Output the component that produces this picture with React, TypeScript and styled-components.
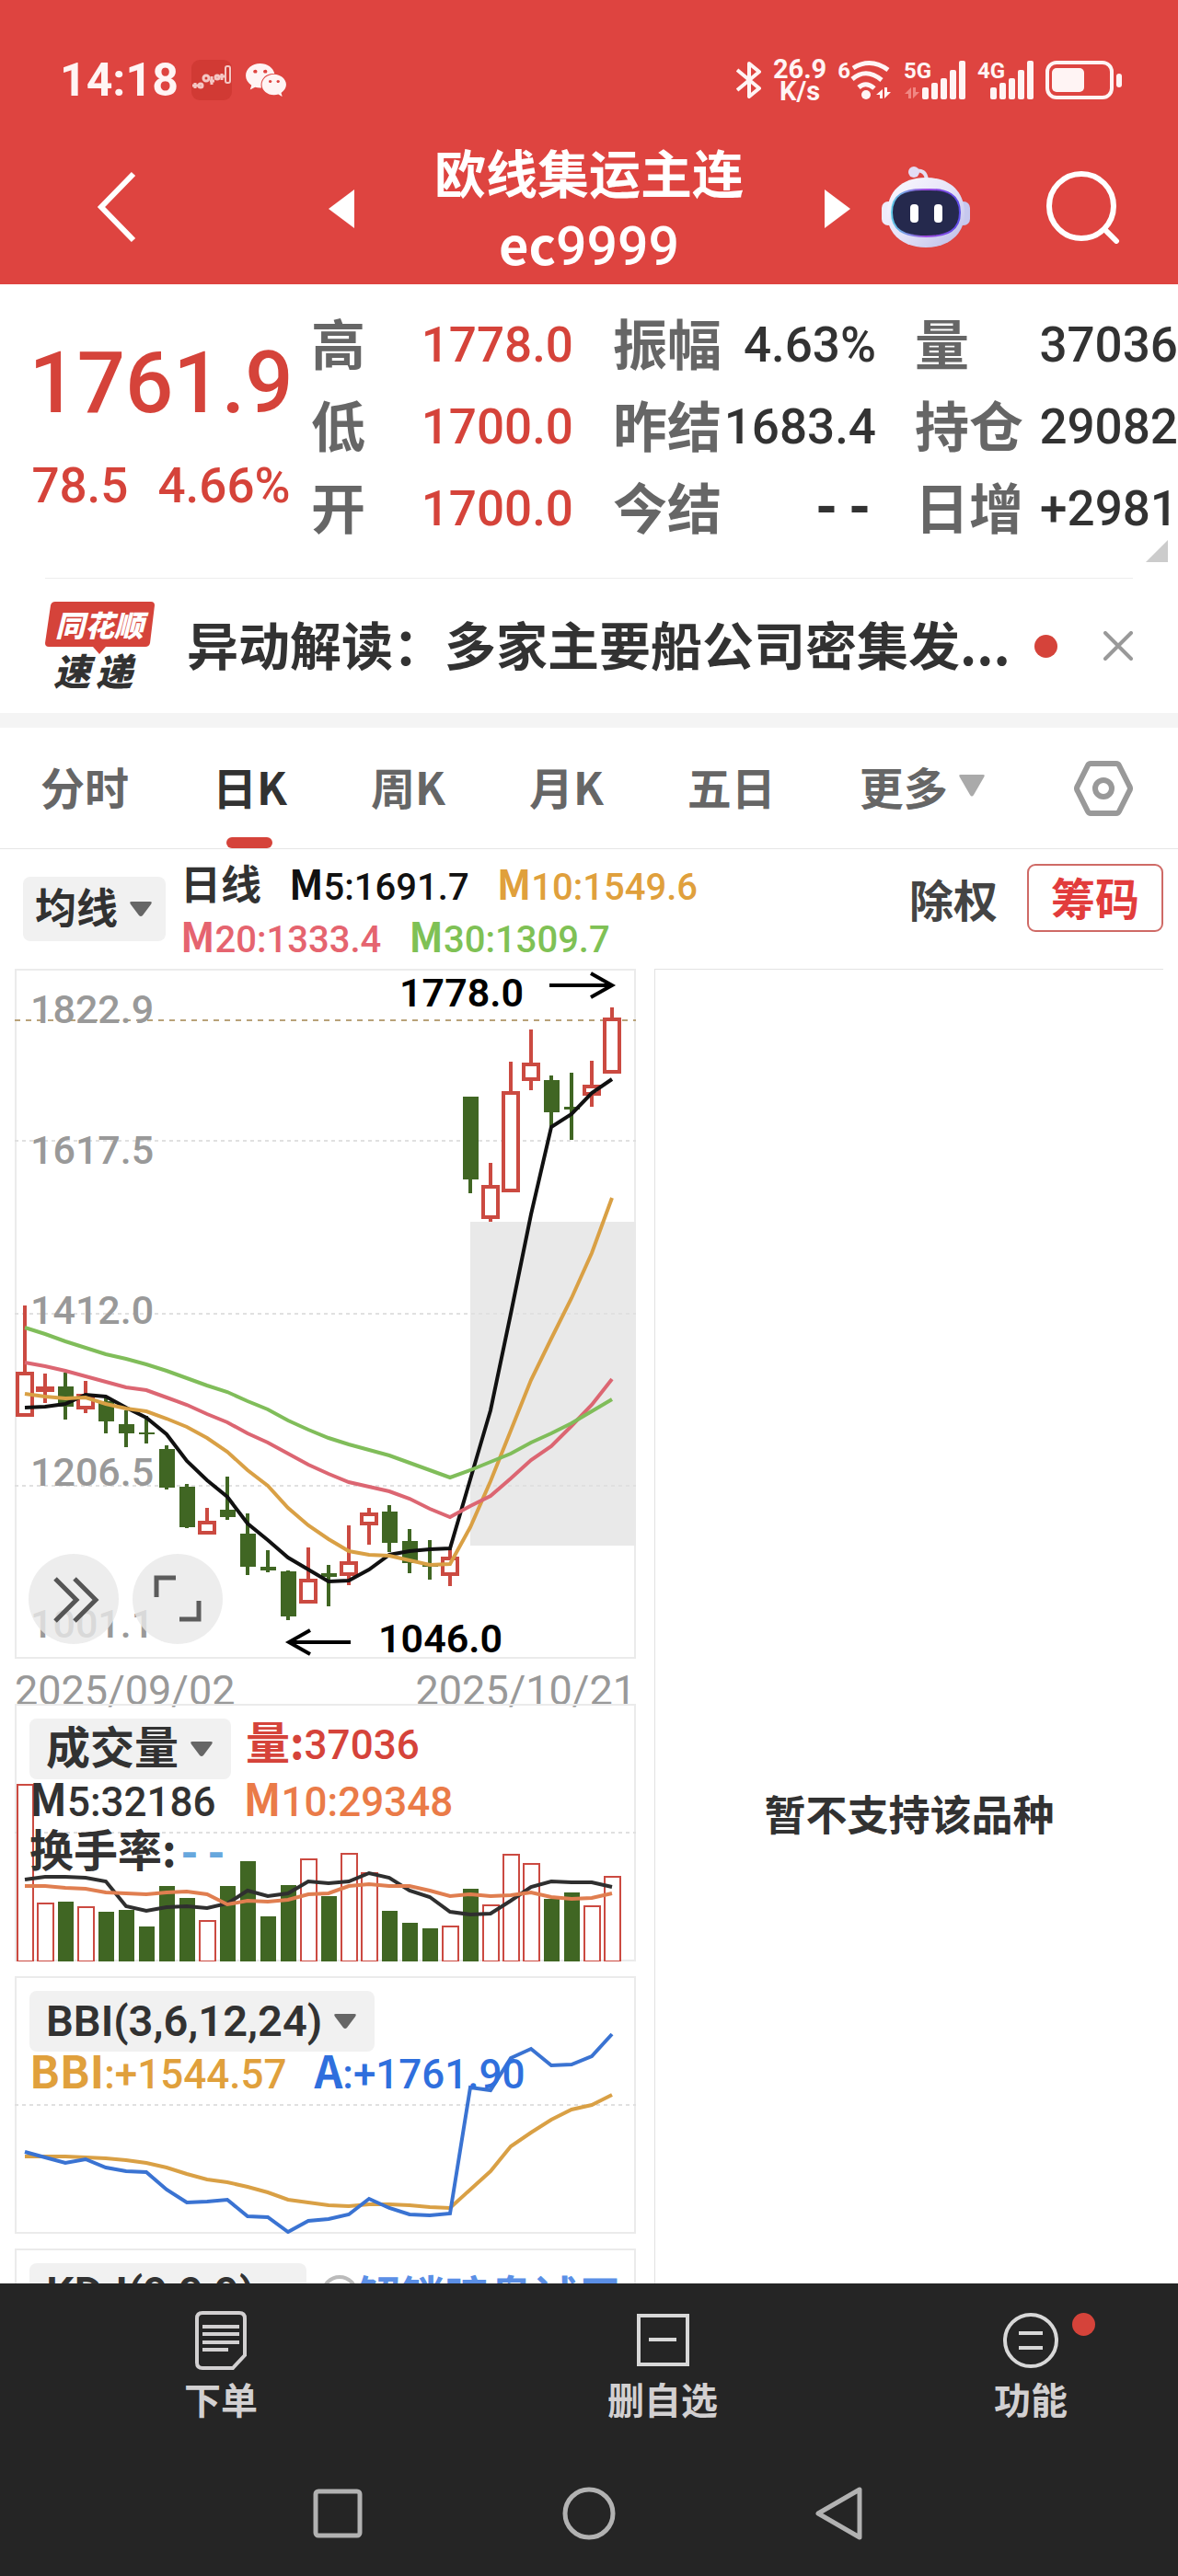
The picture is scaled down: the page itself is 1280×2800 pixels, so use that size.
import React from 'react';
import styled, { createGlobalStyle } from 'styled-components';
import { FaWeixin } from 'react-icons/fa';

const CJK = '"Noto Sans CJK SC", sans-serif';
const NUM = 'Roboto, "Noto Sans CJK SC", sans-serif';

const color = {
  brand: '#de4440',
  up: '#d5433a',
  candleUp: '#cb4a41',
  candleDown: '#406623',
  ink: '#323232',
  label: '#666666',
  axis: '#999999',
  line: '#ebebeb',
  amber: '#e0a03c',
  pink: '#e5646f',
  green: '#7fc155',
  orange: '#ea7b48',
  blue: '#2f6fdd',
  sky: '#67a7dd',
  dark: '#252525',
};

const GlobalStyle = createGlobalStyle`
  *, *::before, *::after { box-sizing: border-box; }
  body { margin: 0; background: #ffffff; font-family: ${CJK}; color: ${color.ink}; }
  button, select { font: inherit; color: inherit; border: 0; background: none; padding: 0; margin: 0; }
  svg { display: block; flex: none; }
`;

const Screen = styled.div`
  display: flex;
  flex-direction: column;
  height: 100vh;
  overflow: hidden;
`;

/* ---------- header ---------- */

const Header = styled.header`
  flex: none;
  background: ${color.brand};
  color: #ffffff;
`;

const StatusBar = styled.div`
  display: flex;
  align-items: center;
  gap: 14px;
  height: 147px;
  padding: 26px 60px 0 65px;
  font-family: ${NUM};
  font-weight: 700;
  color: #fff4f4;
`;

const Clock = styled.time`
  font-size: 50px;
  line-height: 48px;
`;

const StatusIcons = styled.div`
  display: flex;
  align-items: center;
  margin-left: auto;
  gap: 12px;
`;

const Rate = styled.div`
  font-size: 29px;
  line-height: 24px;
  text-align: center;
`;

const Signal = styled.div`
  position: relative;
  display: flex;
  align-items: flex-start;
  height: 44px;
`;

const Generation = styled.span<{ $over?: boolean }>`
  position: ${(p) => (p.$over ? 'absolute' : 'static')};
  left: 0;
  top: 0;
  font-size: 24px;
  line-height: 24px;
`;

const TitleBar = styled.div`
  display: grid;
  grid-template-columns: 1fr 567px 1fr;
  align-items: center;
  height: 162px;
  padding-bottom: 12px;
`;

const IconButton = styled.button`
  display: flex;
  cursor: pointer;
`;

const TitleLeft = styled.div`
  padding: 0 0 4px 104px;
`;

const TitleRight = styled.div`
  display: flex;
  align-items: center;
  justify-content: space-between;
  padding: 0 62px 4px 33px;
`;

const TitleCenter = styled.div`
  display: flex;
  align-items: center;
  justify-content: space-between;
`;

const Title = styled.h1`
  margin: 0;
  font-size: 56px;
  line-height: 78px;
  font-weight: 700;
  text-align: center;
`;

const Num = styled.span<{ $size?: number }>`
  font-family: ${NUM};
  font-weight: 500;
  ${(p) => (p.$size ? `font-size: ${p.$size}px;` : '')}
`;

/* ---------- quote ---------- */

const Quote = styled.section`
  position: relative;
  flex: none;
  display: grid;
  grid-template-columns: 338fr 285fr 329fr 328fr;
  padding: 22px 0 30px;
`;

const PriceBlock = styled.div`
  display: flex;
  flex-direction: column;
  align-items: center;
  gap: 26px;
  padding: 32px 0 0 12px;
  font-family: ${NUM};
  font-weight: 500;
  color: ${color.up};
`;

const Price = styled.div`
  font-size: 92px;
  line-height: 108px;
`;

const Change = styled.div`
  display: flex;
  gap: 32px;
  font-size: 53px;
  line-height: 62px;
`;

const Facts = styled.dl<{ $inset: number }>`
  margin: 0;
  padding-left: ${(p) => p.$inset}px;
`;

const Fact = styled.div`
  display: flex;
  justify-content: space-between;
  align-items: center;
  line-height: 91px;
  height: 89px;
  white-space: nowrap;
`;

const FactName = styled.dt`
  font-size: 59px;
  height: 89px;
  line-height: 82px;
  font-weight: 700;
  color: ${color.label};
`;

const FactValue = styled.dd<{ $up?: boolean; $blank?: boolean }>`
  margin: 0;
  font-family: ${(p) => (p.$blank ? '"Liberation Mono", monospace' : NUM)};
  font-size: ${(p) => (p.$blank ? 60 : 53)}px;
  font-weight: ${(p) => (p.$blank ? 700 : 500)};
  color: ${(p) => (p.$up ? color.up : color.ink)};
`;

const Corner = styled.svg`
  position: absolute;
  right: 11px;
  bottom: 17px;
`;

/* ---------- news ---------- */

const News = styled.section`
  flex: none;
  display: flex;
  align-items: center;
  height: 147px;
  margin: 0 49px;
  border-top: 1px solid #ededed;
`;

const Headline = styled.a`
  flex: 1;
  min-width: 0;
  margin-left: 34px;
  padding-bottom: 6px;
  overflow: hidden;
  white-space: nowrap;
  font-size: 56px;
  line-height: 80px;
  font-weight: 700;
  color: ${color.ink};
  text-decoration: none;
`;

const Dot = styled.span`
  flex: none;
  width: 25px;
  height: 25px;
  border-radius: 50%;
  background: ${color.up};
`;

const NewsClose = styled(IconButton)`
  margin-left: 50px;
`;

const Band = styled.div`
  flex: none;
  height: 16px;
  background: #f4f4f4;
`;

/* ---------- tabs ---------- */

const Tabs = styled.nav`
  flex: none;
  display: flex;
  align-items: stretch;
  gap: 91px;
  height: 132px;
  padding: 0 49px 0 44px;
  border-bottom: 1px solid #e6e6e6;
`;

const Tab = styled.button<{ $active?: boolean }>`
  position: relative;
  display: flex;
  align-items: center;
  gap: 12px;
  padding-bottom: 5px;
  font-size: 48px;
  font-weight: 700;
  color: ${(p) => (p.$active ? color.ink : color.label)};
  white-space: nowrap;
  cursor: pointer;
  &::after {
    content: '';
    display: ${(p) => (p.$active ? 'block' : 'none')};
    position: absolute;
    left: 50%;
    bottom: 0;
    width: 50px;
    height: 12px;
    margin-left: -25px;
    border-radius: 6px;
    background: ${color.up};
  }
`;

const Settings = styled(IconButton)`
  align-items: center;
  margin-left: auto;
`;

/* ---------- indicator row ---------- */

const IndicatorRow = styled.section`
  flex: none;
  display: flex;
  align-items: center;
  height: 130px;
  padding: 0 16px 0 25px;
`;

const Picker = styled.label`
  position: relative;
  display: inline-flex;
  align-items: center;
  border-radius: 8px;
  background: #f1f1f1;
`;

const PickerSelect = styled.select<{ $size: number; $height: number; $pad: number }>`
  appearance: none;
  height: ${(p) => p.$height}px;
  padding: 0 ${(p) => p.$pad + 38}px 0 ${(p) => p.$pad}px;
  border-radius: 8px;
  font-family: ${NUM};
  font-size: ${(p) => p.$size}px;
  font-weight: 600;
`;

const PickerArrow = styled.svg<{ $right: number }>`
  position: absolute;
  right: ${(p) => p.$right}px;
  pointer-events: none;
`;

const Legend = styled.div`
  margin-left: 16px;
`;

const LegendLine = styled.div<{ $height: number }>`
  display: flex;
  align-items: baseline;
  gap: 30px;
  height: ${(p) => p.$height}px;
  line-height: ${(p) => p.$height}px;
  white-space: nowrap;
`;

const Reading = styled.span<{ $color: string; $size: number }>`
  color: ${(p) => p.$color};
  font-size: ${(p) => p.$size}px;
  font-weight: 700;
`;

const Missing = styled.span`
  font-family: "Liberation Mono", monospace;
  font-size: 48px;
  font-weight: 700;
  color: ${color.sky};
`;

const RowActions = styled.div`
  align-self: flex-start;
  display: flex;
  align-items: center;
  gap: 32px;
  margin: 16px 0 0 auto;
  font-size: 48px;
  font-weight: 700;
`;

const PlainButton = styled.button`
  color: #444444;
  cursor: pointer;
`;

const OutlineButton = styled.button`
  height: 74px;
  padding: 0 24px 4px;
  border: 2px solid #cf6a66;
  border-radius: 9px;
  line-height: 64px;
  font-weight: 700;
  color: #e23c3c;
  cursor: pointer;
`;

/* ---------- charts ---------- */

const Charts = styled.main`
  flex: 1;
  min-height: 0;
  overflow: hidden;
  display: grid;
  grid-template-columns: 675fr 553fr;
  gap: 20px;
  padding: 0 16px;
`;

const ChartColumn = styled.div`
  display: flex;
  flex-direction: column;
`;

const Panel = styled.section<{ $gap?: boolean }>`
  position: relative;
  flex: none;
  margin-bottom: ${(p) => (p.$gap ? 16 : 0)}px;
  box-shadow: inset 0 0 0 2px ${color.line};
`;

const Plot = styled.svg`
  width: 100%;
  height: auto;
`;

const PanelHead = styled.div`
  position: absolute;
  inset: 0;
  padding: 16px;
`;

const HeadLine = styled.div`
  display: flex;
  align-items: center;
  gap: 16px;
  height: 66px;
  line-height: 60px;
`;

const HeadReading = styled.div`
  padding-bottom: 6px;
`;

const Readings = styled.div`
  margin-top: -8px;
`;

const ChartTools = styled.div`
  position: absolute;
  left: 15px;
  bottom: 16px;
  display: flex;
  gap: 15px;
`;

const ChartTool = styled(IconButton)`
  width: 98px;
  height: 98px;
  border-radius: 50%;
  background: rgba(232, 232, 232, 0.8);
`;

const Dates = styled.div`
  flex: none;
  display: flex;
  justify-content: space-between;
  height: 49px;
  font-family: ${NUM};
  font-size: 45px;
  line-height: 70px;
  color: ${color.axis};
`;

const Trial = styled.a`
  display: flex;
  align-items: center;
  font-size: 48px;
  font-weight: 700;
  color: #5b8fe6;
  text-decoration: none;
  white-space: nowrap;
`;

const SidePanel = styled.aside`
  display: flex;
  justify-content: center;
  border: solid #e2e2e2;
  border-width: 1px 0 0 1px;
  padding-top: 880px;
  font-size: 45px;
  line-height: 74px;
  font-weight: 700;
`;

/* ---------- bottom ---------- */

const Bottom = styled.footer`
  flex: none;
  background: ${color.dark};
`;

const Actions = styled.nav`
  display: grid;
  grid-template-columns: 3fr 3fr 2fr;
  height: 182px;
  padding-top: 28px;
`;

const Action = styled.button`
  position: relative;
  justify-self: center;
  align-self: start;
  display: flex;
  flex-direction: column;
  align-items: center;
  font-size: 40px;
  line-height: 58px;
  font-weight: 700;
  color: #d2d0d1;
  cursor: pointer;
`;

const ActionBadge = styled(Dot)`
  position: absolute;
  left: calc(50% + 45px);
  top: 4px;
`;

const SystemNav = styled.nav`
  display: grid;
  grid-template-columns: repeat(3, 1fr);
  justify-items: center;
  align-items: center;
  height: 136px;
  padding: 0 230px;
`;

/* ---------- data ---------- */

type Candle = [up: 0 | 1, high: number, top: number, bottom: number, low: number];

const candles: Candle[] = [
  [1, 366, 438, 487, 487], [1, 440, 454, 460, 472], [0, 439, 454, 476, 490],
  [1, 448, 462, 479, 483], [0, 465, 470, 492, 505], [0, 480, 495, 505, 520],
  [0, 486, 504, 506, 516], [0, 518, 522, 564, 566], [0, 560, 563, 607, 608],
  [1, 586, 600, 615, 615], [0, 552, 588, 596, 599], [0, 592, 614, 650, 659],
  [0, 632, 650, 654, 656], [0, 654, 655, 704, 708], [1, 629, 663, 690, 690],
  [0, 648, 657, 661, 693], [1, 605, 644, 660, 670], [1, 586, 591, 605, 626],
  [0, 583, 590, 624, 634], [0, 609, 622, 646, 657], [0, 621, 648, 650, 664],
  [1, 631, 639, 660, 671], [0, 139, 139, 229, 244], [1, 211, 235, 272, 275],
  [1, 101, 133, 243, 243], [1, 66, 102, 122, 132], [0, 116, 121, 156, 171],
  [0, 113, 150, 153, 186], [1, 100, 126, 138, 150], [1, 42, 53, 114, 114],
];

const ma5 = [477, 476, 473, 463, 465, 477, 488, 506, 535, 556, 574, 603, 621, 640, 653, 666, 665, 653, 637, 633, 631, 630, 555, 480, 375, 267, 172, 158, 135, 120];
const ma10 = [462, 465, 467, 466, 473, 478, 481, 489, 498, 510, 525, 545, 562, 586, 605, 620, 633, 637, 638, 643, 648, 647, 607, 557, 502, 447, 402, 358, 309, 249];
const ma20 = [428, 432, 437, 443, 449, 455, 458, 466, 474, 484, 493, 505, 515, 527, 539, 549, 558, 563, 568, 576, 587, 596, 584, 573, 554, 534, 519, 497, 474, 446];
const ma30 = [390, 397, 405, 412, 419, 424, 430, 437, 445, 453, 460, 470, 479, 491, 501, 510, 517, 523, 529, 537, 545, 553, 545, 536, 527, 515, 505, 494, 481, 468];

const volumes = [87, 216, 215, 220, 226, 224, 242, 198, 211, 235, 198, 171, 231, 197, 168, 209, 162, 183, 225, 238, 244, 241, 201, 218, 163, 173, 212, 205, 219, 187];
const vol5 = [191, 188, 188, 189, 193, 220, 225, 221, 220, 222, 217, 203, 209, 206, 193, 195, 193, 184, 189, 203, 210, 226, 229, 228, 214, 199, 193, 194, 194, 199];
const vol10 = [198, 198, 200, 201, 205, 206, 207, 205, 204, 207, 218, 214, 215, 213, 207, 206, 198, 196, 198, 198, 203, 209, 207, 209, 208, 205, 210, 212, 211, 206];

const bbi = [196, 196, 196, 197, 198, 200, 203, 208, 215, 221, 224, 229, 235, 243, 246, 249, 250, 248, 248, 249, 251, 252, 232, 212, 185, 170, 156, 145, 140, 129];
const bbiA = [191, 197, 203, 199, 208, 212, 213, 232, 246, 245, 243, 261, 262, 278, 266, 264, 259, 242, 252, 259, 260, 258, 121, 124, 89, 79, 97, 96, 87, 63];

const xAt = (i: number) => 11 + 22 * i;
const toPoints = (values: number[]) => values.map((v, i) => `${xAt(i)},${v}`).join(' ');

const Series = ({ values, stroke, width = 4 }: { values: number[]; stroke: string; width?: number }) => (
  <polyline points={toPoints(values)} fill="none" stroke={stroke} strokeWidth={width} />
);

const GridLine = ({ y }: { y: number }) => (
  <line x1="0" x2="675" y1={y} y2={y} stroke="#e0e0e0" strokeWidth="2" strokeDasharray="4 4" />
);

const axisLabels: [string, number][] = [
  ['1822.9', 59], ['1617.5', 212], ['1412.0', 386], ['1206.5', 562], ['1001.1', 727],
];

const PriceChart = () => (
  <Plot viewBox="0 0 675 750" role="img" aria-label="日K">
    <rect x="495" y="275" width="180" height="352" fill="#e9e9e9" />
    {[187, 375, 562].map((y) => <GridLine key={y} y={y} />)}
    <line x1="0" x2="675" y1="56" y2="56" stroke="#b9a279" strokeWidth="2" strokeDasharray="6 6" />
    <g fill={color.axis} fontFamily="Roboto" fontWeight="500" fontSize="43">
      {axisLabels.map(([t, y]) => <text key={t} x="17" y={y}>{t}</text>)}
    </g>
    {candles.map(([up, high, top, bottom, low], i) => {
      const x = xAt(i);
      const c = up ? color.candleUp : color.candleDown;
      return (
        <g key={i} stroke={c} strokeWidth="4">
          {high < top && <line x1={x} x2={x} y1={high} y2={top} />}
          {low > bottom && <line x1={x} x2={x} y1={bottom} y2={low} />}
          {up ? (
            <rect x={x - 8} y={top + 2} width="16" height={Math.max(bottom - top - 4, 2)} fill="#ffffff" />
          ) : (
            <rect x={x - 8} y={top} width="17" height={bottom - top} fill={c} stroke="none" />
          )}
        </g>
      );
    })}
    <Series values={ma5} stroke="#111111" />
    <Series values={ma10} stroke="#d9a045" />
    <Series values={ma20} stroke="#dc6672" />
    <Series values={ma30} stroke="#80bd5a" />
    <g fill="#000000" fontFamily="Roboto" fontWeight="600" fontSize="43">
      <text x="418" y="41">1778.0</text>
      <text x="395" y="743">1046.0</text>
    </g>
    <g fill="none" stroke="#000000" strokeWidth="4">
      <path d="M581 18H649M626 5L649 18L626 31" />
      <path d="M365 732H298M321 719L298 732L321 745" />
    </g>
  </Plot>
);

const VolumeChart = () => (
  <Plot viewBox="0 0 675 280" role="img" aria-label="成交量">
    <GridLine y={140} />
    {volumes.map((top, i) => {
      const x = xAt(i);
      return candles[i][0] ? (
        <rect key={i} x={x - 8} y={top + 1} width="17" height={279 - top} fill="#ffffff" stroke={color.candleUp} strokeWidth="2" />
      ) : (
        <rect key={i} x={x - 8} y={top} width="17" height={280 - top} fill={color.candleDown} />
      );
    })}
    <Series values={vol5} stroke="#2f2f2f" />
    <Series values={vol10} stroke="#e07e50" />
  </Plot>
);

const BbiChart = () => (
  <Plot viewBox="0 0 675 280" role="img" aria-label="BBI">
    <GridLine y={140} />
    <Series values={bbi} stroke="#d9a045" />
    <Series values={bbiA} stroke="#3a73d2" />
  </Plot>
);

const Dropdown = ({ text, name, size, height, pad }: { text: string; name: string; size: number; height: number; pad: number }) => (
  <Picker>
    <PickerSelect aria-label={name} $size={size} $height={height} $pad={pad} defaultValue={text}>
      <option>{text}</option>
    </PickerSelect>
    <PickerArrow $right={pad + 2} width="24" height="16" viewBox="0 0 24 16">
      <path d="M2 0H22Q25 0 23 3L14 15Q12 17 10 15L1 3Q-1 0 2 0Z" fill="#666666" />
    </PickerArrow>
  </Picker>
);

const Value = ({ name, value, tint, size, digits }: { name: string; value: string; tint: string; size: number; digits: number }) => (
  <Reading $color={tint} $size={size}>
    {name}<Num $size={digits}>{value}</Num>
  </Reading>
);

/* ---------- icons ---------- */

const AppBadge = () => (
  <svg width="44" height="44" viewBox="0 0 44 44">
    <rect width="44" height="44" rx="9" fill="#d13a34" />
    <g fill="none" stroke="#f4c7c4" strokeWidth="3">
      <path d="M1 28H8M4 25V31" />
      <circle cx="10" cy="28" r="2" />
      <circle cx="16" cy="20" r="3" />
      <path d="M22 18V27M20 23H25" />
      <circle cx="28" cy="19" r="2" />
      <path d="M33 15V22M31 18H36" />
      <rect x="37" y="7" width="5" height="18" rx="2" strokeWidth="2" />
    </g>
  </svg>
);

const BluetoothIcon = () => (
  <svg width="28" height="42" viewBox="0 0 28 42" fill="none" stroke="#fff4f4" strokeWidth="4" strokeLinejoin="round">
    <path d="M1 10L25 30L14 39V3L25 12L1 32" />
  </svg>
);

const WifiIcon = () => (
  <svg width="46" height="44" viewBox="0 0 46 44" fill="none" stroke="#fff4f4" strokeWidth="5">
    <path d="M3 9Q22 -3 41 11" />
    <path d="M2 21Q17 8 34 22" />
    <path d="M9 30Q17 23 26 31" />
    <circle cx="17" cy="38" r="5" fill="#fff4f4" stroke="none" />
    <path d="M35 42V32L28 38H32V42ZM37 30V42L44 35H40V30Z" fill="#fff4f4" stroke="none" />
  </svg>
);

const BarsIcon = ({ faded }: { faded?: boolean }) => (
  <svg width={faded ? 68 : 62} height="44" viewBox={faded ? '0 0 68 44' : '6 0 62 44'} fill="#fff4f4">
    {faded && <path d="M8 42V30L1 37H5V42ZM10 30V42L17 35H13V30Z" fill="#f08783" />}
    <rect x="20" y="30" width="7" height="13" rx="2" />
    <rect x="30" y="25" width="7" height="18" rx="2" />
    <rect x="40" y="20" width="7" height="23" rx="2" />
    <rect x="50" y="11" width="7" height="32" rx="2" />
    <rect x="60" y="1" width="7" height="42" rx="2" />
  </svg>
);

const BatteryIcon = () => (
  <svg width="84" height="42" viewBox="0 0 84 42">
    <rect x="2" y="2" width="70" height="38" rx="10" fill="none" stroke="#fff4f4" strokeWidth="4" />
    <rect x="7" y="8" width="35" height="26" rx="5" fill="#fff4f4" />
    <rect x="77" y="14" width="6" height="15" rx="3" fill="#fff4f4" />
  </svg>
);

const Robot = () => (
  <svg width="98" height="90" viewBox="0 0 98 90">
    <defs>
      <linearGradient id="shell" x1="0" y1="0" x2="1" y2="1">
        <stop offset="0" stopColor="#fbfaff" />
        <stop offset="0.5" stopColor="#e6e3f8" />
        <stop offset="1" stopColor="#b9bbe6" />
      </linearGradient>
      <linearGradient id="rim" x1="0" y1="0" x2="1" y2="0">
        <stop offset="0" stopColor="#5fc8e6" />
        <stop offset="0.5" stopColor="#a04be0" />
        <stop offset="1" stopColor="#5b4be6" />
      </linearGradient>
    </defs>
    <path d="M36 6Q49 3 50 16" fill="none" stroke="#e6dff3" strokeWidth="4" />
    <circle cx="36" cy="7" r="6" fill="#e3dcf5" />
    <rect x="1" y="39" width="14" height="26" rx="7" fill="#eeecfa" />
    <rect x="83" y="39" width="14" height="26" rx="7" fill="#c6c8ee" />
    <path d="M49 13C76 13 91 29 91 52C91 76 72 89 49 89C26 89 7 76 7 52C7 29 22 13 49 13Z" fill="url(#shell)" />
    <path d="M49 26C73 25 86 32 86 51C86 70 73 77 49 77C25 77 12 70 12 51C12 32 25 25 49 26Z" fill="#25294d" stroke="url(#rim)" strokeWidth="2" />
    <rect x="32" y="42" width="9" height="20" rx="4" fill="#ffffff" />
    <rect x="58" y="42" width="9" height="20" rx="4" fill="#ffffff" />
  </svg>
);

const NewsLogo = () => (
  <svg width="120" height="96" viewBox="0 0 120 96" role="img" aria-label="同花顺速递">
    <path d="M11 0H115Q119 0 119 4L114 45Q113 49 109 49H66L59 57L52 49H4Q0 49 0 45L6 4Q7 0 11 0Z" fill={color.up} />
    <g fontFamily="Noto Sans CJK SC" fontWeight="900" fontStyle="italic">
      <text x="11" y="38" fontSize="32" fill="#ffffff">同花顺</text>
      <text x="9" y="91" fontSize="40" fill={color.ink}>速</text>
      <text x="55" y="91" fontSize="40" fill={color.ink}>递</text>
    </g>
  </svg>
);

const facts: { inset: number; rows: { name: string; value: string; up?: boolean; blank?: boolean }[] }[] = [
  { inset: 0, rows: [{ name: '高', value: '1778.0', up: true }, { name: '低', value: '1700.0', up: true }, { name: '开', value: '1700.0', up: true }] },
  { inset: 43, rows: [{ name: '振幅', value: '4.63%' }, { name: '昨结', value: '1683.4' }, { name: '今结', value: '--', blank: true }] },
  { inset: 42, rows: [{ name: '量', value: '37036' }, { name: '持仓', value: '29082' }, { name: '日增', value: '+2981' }] },
];

export default function App() {
  return (
    <Screen>
      <GlobalStyle />
      <Header>
        <StatusBar>
          <Clock>14:18</Clock>
          <AppBadge />
          <FaWeixin size={46} />
          <StatusIcons>
            <BluetoothIcon />
            <Rate>26.9<br />K/s</Rate>
            <Signal>
              <Generation>6</Generation>
              <WifiIcon />
            </Signal>
            <Signal>
              <Generation $over>5G</Generation>
              <BarsIcon faded />
            </Signal>
            <Signal>
              <Generation $over>4G</Generation>
              <BarsIcon />
            </Signal>
            <BatteryIcon />
          </StatusIcons>
        </StatusBar>
        <TitleBar>
          <TitleLeft>
            <IconButton aria-label="返回">
              <svg width="46" height="78" viewBox="0 0 46 78" fill="none" stroke="#ffffff" strokeWidth="6">
                <path d="M41 3L6 39L41 75" />
              </svg>
            </IconButton>
          </TitleLeft>
          <TitleCenter>
            <IconButton aria-label="上一个">
              <svg width="28" height="42" viewBox="0 0 28 42"><path d="M28 0V42L0 21Z" fill="#ffffff" /></svg>
            </IconButton>
            <Title>欧线集运主连<br />ec<Num $size={59}>9999</Num></Title>
            <IconButton aria-label="下一个">
              <svg width="28" height="42" viewBox="0 0 28 42"><path d="M0 0V42L28 21Z" fill="#ffffff" /></svg>
            </IconButton>
          </TitleCenter>
          <TitleRight>
            <IconButton aria-label="智能助手"><Robot /></IconButton>
            <IconButton aria-label="搜索">
              <svg width="82" height="80" viewBox="0 0 82 80" fill="none" stroke="#ffffff" strokeWidth="6">
                <circle cx="39" cy="39" r="35" />
                <path d="M64 64L77 77" strokeLinecap="round" />
              </svg>
            </IconButton>
          </TitleRight>
        </TitleBar>
      </Header>

      <Quote>
        <PriceBlock>
          <Price>1761.9</Price>
          <Change><span>78.5</span><span>4.66%</span></Change>
        </PriceBlock>
        {facts.map((group) => (
          <Facts key={group.inset} $inset={group.inset}>
            {group.rows.map((row) => (
              <Fact key={row.name}>
                <FactName>{row.name}</FactName>
                <FactValue $up={row.up} $blank={row.blank}>{row.value}</FactValue>
              </Fact>
            ))}
          </Facts>
        ))}
        <Corner width="24" height="24" viewBox="0 0 24 24"><path d="M24 0V24H0Z" fill="#cccccc" /></Corner>
      </Quote>

      <News>
        <NewsLogo />
        <Headline href="#news">异动解读：多家主要船公司密集发...</Headline>
        <Dot />
        <NewsClose aria-label="关闭">
          <svg width="32" height="32" viewBox="0 0 32 32" stroke="#999999" strokeWidth="4" strokeLinecap="round">
            <path d="M2 2L30 30M30 2L2 30" />
          </svg>
        </NewsClose>
      </News>
      <Band />

      <Tabs>
        <Tab>分时</Tab>
        <Tab $active>日K</Tab>
        <Tab>周K</Tab>
        <Tab>月K</Tab>
        <Tab>五日</Tab>
        <Tab>
          更多
          <svg width="28" height="24" viewBox="0 0 28 24"><path d="M2 0H26Q29 0 27 3L16 22Q14 25 12 22L1 3Q-1 0 2 0Z" fill="#aaaaaa" /></svg>
        </Tab>
        <Settings aria-label="设置">
          <svg width="64" height="62" viewBox="0 0 64 62" fill="none" stroke="#999999" strokeWidth="6" strokeLinejoin="round">
            <path d="M18 4H46Q48 4 49 6L60 28Q62 31 60 34L49 56Q48 58 46 58H18Q16 58 15 56L4 34Q2 31 4 28L15 6Q16 4 18 4Z" />
            <circle cx="32" cy="31" r="9" />
          </svg>
        </Settings>
      </Tabs>

      <IndicatorRow>
        <Dropdown name="主图指标" text="均线" size={45} height={70} pad={13} />
        <Legend>
          <LegendLine $height={57}>
            <Reading $color={color.ink} $size={44}>日线</Reading>
            <Value name="M" value="5:1691.7" tint="#111111" size={44} digits={40} />
            <Value name="M" value="10:1549.6" tint={color.amber} size={44} digits={40} />
          </LegendLine>
          <LegendLine $height={57}>
            <Value name="M" value="20:1333.4" tint={color.pink} size={44} digits={40} />
            <Value name="M" value="30:1309.7" tint={color.green} size={44} digits={40} />
          </LegendLine>
        </Legend>
        <RowActions>
          <PlainButton>除权</PlainButton>
          <OutlineButton>筹码</OutlineButton>
        </RowActions>
      </IndicatorRow>

      <Charts>
        <ChartColumn>
          <Panel>
            <PriceChart />
            <ChartTools>
              <ChartTool aria-label="展开">
                <svg width="98" height="98" viewBox="0 0 98 98" fill="none" stroke="#555555" strokeWidth="5">
                  <path d="M29 27L52 50L29 73M50 27L73 50L50 73" />
                </svg>
              </ChartTool>
              <ChartTool aria-label="全屏">
                <svg width="98" height="98" viewBox="0 0 98 98" fill="none" stroke="#5c5c5c" strokeWidth="5">
                  <path d="M47 26H26V47M51 71H72V51" />
                </svg>
              </ChartTool>
            </ChartTools>
          </Panel>
          <Dates><span>2025/09/02</span><span>2025/10/21</span></Dates>
          <Panel $gap>
            <VolumeChart />
            <PanelHead>
              <HeadLine>
                <Dropdown name="副图指标一" text="成交量" size={48} height={66} pad={18} />
                <HeadReading>
                  <Value name="量:" value="37036" tint={color.up} size={48} digits={44} />
                </HeadReading>
              </HeadLine>
              <Readings>
                <LegendLine $height={55}>
                  <Value name="M" value="5:32186" tint={color.ink} size={48} digits={44} />
                  <Value name="M" value="10:29348" tint={color.orange} size={48} digits={44} />
                </LegendLine>
                <LegendLine $height={55}>
                  <Reading $color={color.ink} $size={48}>换手率:<Missing>--</Missing></Reading>
                </LegendLine>
              </Readings>
            </PanelHead>
          </Panel>
          <Panel $gap>
            <BbiChart />
            <PanelHead>
              <HeadLine>
                <Dropdown name="副图指标二" text="BBI(3,6,12,24)" size={47} height={66} pad={18} />
              </HeadLine>
              <Readings>
                <LegendLine $height={55}>
                  <Value name="BBI" value=":+1544.57" tint={color.amber} size={48} digits={44} />
                  <Value name="A" value=":+1761.90" tint={color.blue} size={48} digits={44} />
                </LegendLine>
              </Readings>
            </PanelHead>
          </Panel>
          <Panel>
            <Plot viewBox="0 0 675 280" role="img" aria-label="KDJ"><GridLine y={140} /></Plot>
            <PanelHead>
              <HeadLine>
                <Dropdown name="副图指标三" text="KDJ(9,9,9)" size={48} height={66} pad={18} />
                <Trial href="#trial">
                  <svg width="38" height="40" viewBox="0 0 38 40" fill="none" stroke="#bbbbbb" strokeWidth="4">
                    <circle cx="20" cy="20" r="18" />
                    <circle cx="20" cy="20" r="8" />
                  </svg>
                  解锁暗盘试用
                </Trial>
              </HeadLine>
            </PanelHead>
          </Panel>
        </ChartColumn>
        <SidePanel>暂不支持该品种</SidePanel>
      </Charts>

      <Bottom>
        <Actions>
          <Action>
            <svg width="60" height="68" viewBox="0 0 60 68" fill="none" stroke="#d2d0d1" strokeWidth="4">
              <path d="M10 4H50Q56 4 56 10V50L43 64H10Q4 64 4 58V10Q4 4 10 4Z" />
              <path d="M10 19H50M10 27H50M10 36H50M10 44H38" />
            </svg>
            下单
          </Action>
          <Action>
            <svg width="60" height="68" viewBox="0 0 60 68" fill="none" stroke="#d8d8d8" strokeWidth="4">
              <rect x="4" y="7" width="53" height="53" />
              <path d="M15 33H45" />
            </svg>
            删自选
          </Action>
          <Action>
            <svg width="60" height="68" viewBox="0 0 60 68" fill="none" stroke="#d8d8d8" strokeWidth="4">
              <circle cx="30" cy="34" r="28" />
              <path d="M17 26H43M17 42H43" />
            </svg>
            功能
            <ActionBadge />
          </Action>
        </Actions>
        <SystemNav>
          <IconButton aria-label="最近任务">
            <svg width="58" height="60" viewBox="0 0 58 60" fill="none" stroke="#b2b2b2" strokeWidth="5">
              <rect x="5" y="6" width="48" height="48" rx="3" />
            </svg>
          </IconButton>
          <IconButton aria-label="主页">
            <svg width="58" height="60" viewBox="0 0 58 60" fill="none" stroke="#b2b2b2" strokeWidth="5">
              <circle cx="29" cy="30" r="26" />
            </svg>
          </IconButton>
          <IconButton aria-label="系统返回">
            <svg width="58" height="60" viewBox="0 0 58 60" fill="none" stroke="#b2b2b2" strokeWidth="5" strokeLinejoin="round">
              <path d="M50 4V56L5 30Z" />
            </svg>
          </IconButton>
        </SystemNav>
      </Bottom>
    </Screen>
  );
}
